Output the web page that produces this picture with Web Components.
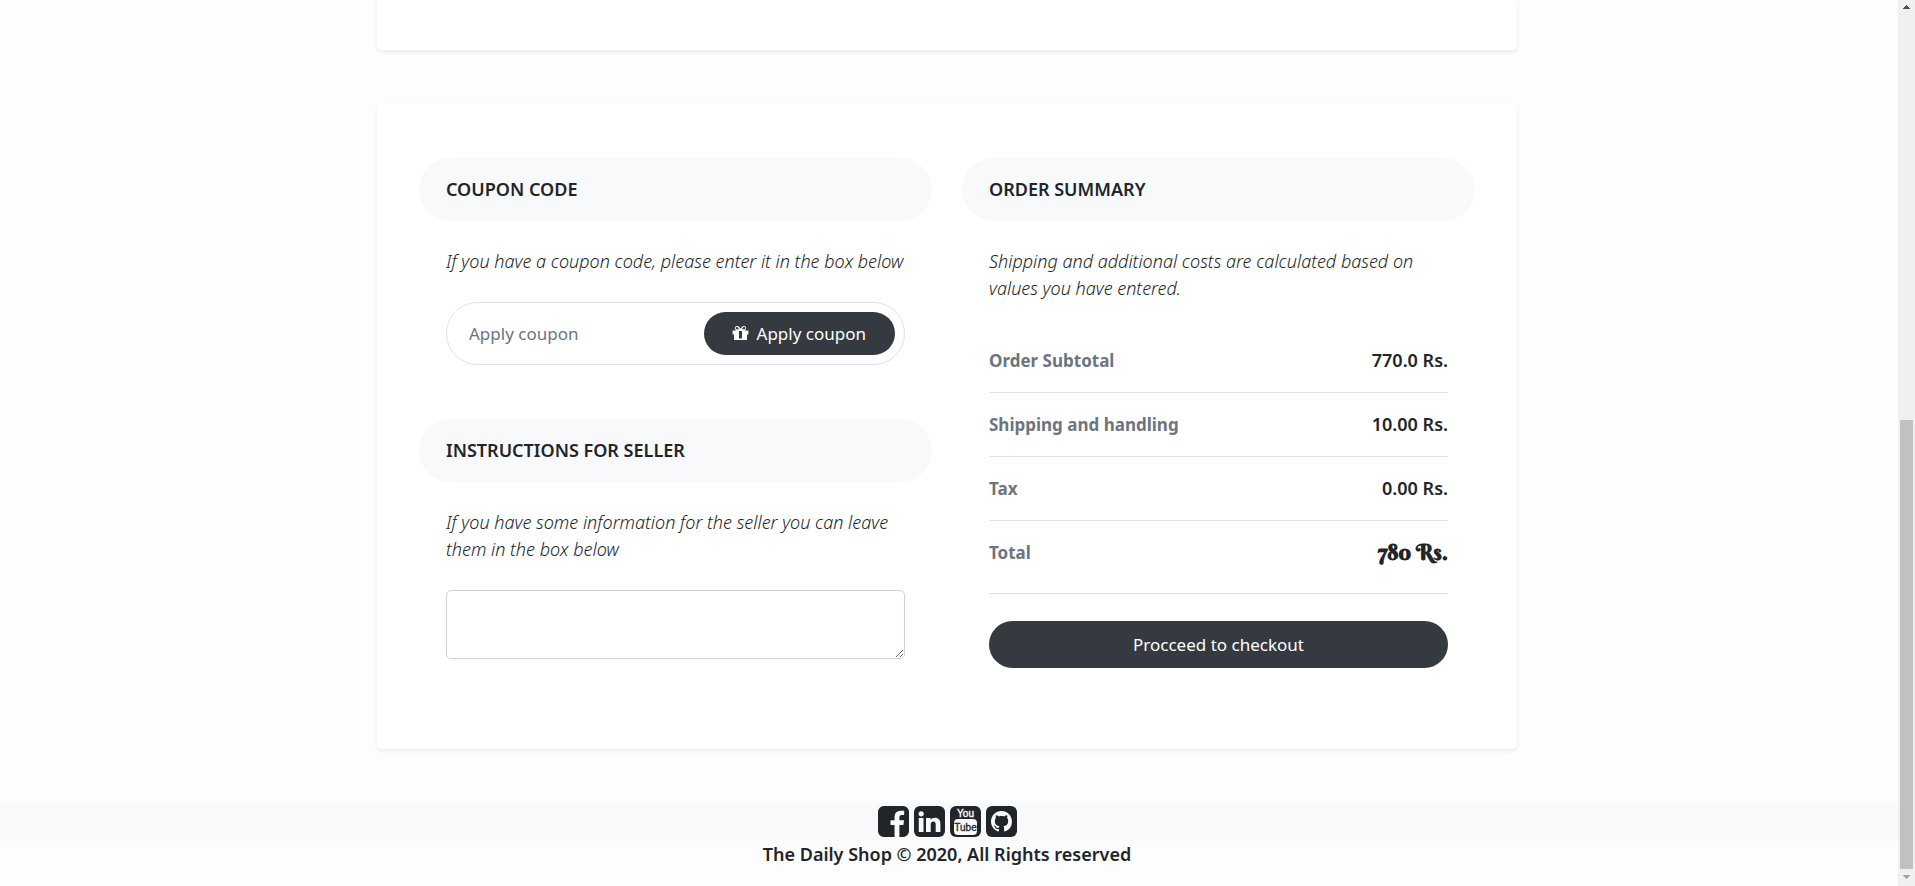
<!DOCTYPE html>
<html lang="en">
<head>
<meta charset="utf-8">
<title>The Daily Shop</title>
<style>
body { margin: 0; }
</style>
</head>
<body>
<shop-page>
  <shop-card slot="main" class="first"></shop-card>
  <shop-card slot="main">
    <shop-column>
      <shop-section>
        <span slot="title">Coupon code</span>
        <span slot="lead">If you have a coupon code, please enter it in the box below</span>
        <coupon-form></coupon-form>
      </shop-section>
      <shop-section>
        <span slot="title">Instructions for seller</span>
        <span slot="lead">If you have some information for the seller you can leave them in the box below</span>
        <seller-note></seller-note>
      </shop-section>
    </shop-column>
    <shop-column>
      <shop-section>
        <span slot="title">Order summary</span>
        <span slot="lead">Shipping and additional costs are calculated based on values you have entered.</span>
        <order-summary></order-summary>
      </shop-section>
    </shop-column>
  </shop-card>
  <shop-footer slot="footer"></shop-footer>
</shop-page>
<script>
function define(name, html) {
  const t = document.createElement('template');
  t.innerHTML = html;
  customElements.define(name, class extends HTMLElement {
    constructor() {
      super();
      this.attachShadow({ mode: 'open' }).appendChild(t.content.cloneNode(true));
    }
  });
}

define('shop-page', `
<style>
:host { display: grid; grid-template-columns: minmax(0, 1fr) 17px; height: 100vh; overflow: hidden; background: #fdfdfd;
  font: 17px/27px "Noto Sans", "Open Sans", sans-serif; color: #212529; }
.view { min-width: 0; }
main { display: grid; justify-items: center; gap: 54px; padding: 0 20px 54px 16px; }
</style>
<div class="view"><main><slot name="main"></slot></main><slot name="footer"></slot></div>
<scroll-rail></scroll-rail>`);

define('shop-card', `
<style>
:host { box-sizing: border-box; width: 100%; max-width: 1140px; padding: 54px 27px; display: grid;
  grid-template-columns: repeat(auto-fit, minmax(360px, 1fr)); background: #fff; border-radius: 5px;
  box-shadow: 0 2px 4px rgba(0, 0, 0, .075); }
:host(.first) { padding: 50px 0 0; border-radius: 0 0 5px 5px; }
</style><slot></slot>`);

define('shop-column', `<style>:host { display: block; padding: 0 15px; min-width: 0; }</style><slot></slot>`);

define('shop-section', `
<style>
:host { display: block; }
h2 { margin: 0; padding: 18px 27px; border-radius: 32px; background: #f8f9fb; font-size: 18px; font-weight: 600; text-transform: uppercase; }
.body { padding: 27px; }
p { margin: 0 0 27px; font-size: 18px; font-weight: 300; font-style: italic; }
</style>
<h2><slot name="title"></slot></h2>
<div class="body"><p><slot name="lead"></slot></p><slot></slot></div>`);

define('coupon-form', `
<style>
:host { display: block; margin-bottom: 27px; }
form { display: flex; padding: 9px; border: 1px solid #dee2e6; border-radius: 32px; }
input { flex: 1; min-width: 0; box-sizing: border-box; height: 43px; padding: 0 13px; border: 0; background: none; font: inherit; color: #495057; outline: 0; }
input::placeholder { color: #6c757d; opacity: 1; }
button { display: flex; align-items: center; gap: 8px; height: 43px; padding: 0 29px 0 28px; border: 0; border-radius: 22px; background: #343a40; color: #fff; font: inherit; white-space: nowrap; }
svg { width: 17px; height: 17px; fill: currentColor; }
</style>
<form>
<input type="text" placeholder="Apply coupon" aria-label="Apply coupon">
<button type="button"><svg viewBox="0 0 17 17" aria-hidden="true"><path fill-rule="evenodd" d="M.6 5.5h4.2A2.3 2.3 0 1 1 7 1.8l1.5 1.9L10 1.8a2.3 2.3 0 1 1 2.2 3.7h4.2v4H15V15H2V9.500H.6zM3.700 3.200c0 .7.5 1.100 1.200 1.100h2.200L5.900 2.500c-.8-1-2.200-.4-2.200.7zm9.600 0c0-1.100-1.400-1.700-2.200-.7L9.900 4.300h2.200c.7 0 1.200-.4 1.200-1.100zM7 6v7.500h3V6z"/></svg><span>Apply coupon</span></button>
</form>`);

define('seller-note', `
<style>
:host { display: block; }
textarea { display: block; box-sizing: border-box; width: 100%; height: 69px; padding: 6px 13px; border: 1px solid #ced4da; border-radius: 5px; font: inherit; color: #495057; background: #fff; resize: vertical; outline: 0; }
</style><textarea rows="2" aria-label="Instructions for seller"></textarea>`);

define('order-summary', `
<style>
:host { display: block; }
table { width: 100%; border-collapse: separate; border-spacing: 0; margin-bottom: 27px; }
th, td { padding: 18px 0; border-bottom: 1px solid #dee2e6; vertical-align: top; line-height: 27px; }
th { text-align: left; color: #6c757d; font-size: 17px; font-weight: 700; }
td { text-align: right; font-size: 18px; font-weight: 600; }
.total td { padding-bottom: 27px; font-family: "Berkshire Swash", "Liberation Serif", serif; font-size: 22px; font-weight: 700; }
button { display: block; width: 100%; height: 47px; padding: 0; border: 0; border-radius: 24px; background: #343a40; color: #fff; font: inherit; }
</style>
<table>
<tr><th scope="row">Order Subtotal</th><td>770.0 Rs.</td></tr>
<tr><th scope="row">Shipping and handling</th><td>10.00 Rs.</td></tr>
<tr><th scope="row">Tax</th><td>0.00 Rs.</td></tr>
<tr class="total"><th scope="row">Total</th><td>780 Rs.</td></tr>
</table>
<button type="button">Procceed to checkout</button>`);

define('shop-footer', `
<style>
:host { display: block; text-align: center; font-size: 18px; font-weight: 600; }
nav { display: flex; justify-content: center; gap: 5px; padding: 3px 4px 4px 0; background: #f8f9fb; }
a { display: block; height: 31px; color: inherit; }
svg { display: block; width: 31px; height: 31px; }
text { font-family: "Liberation Sans Narrow", "Liberation Sans", sans-serif; font-weight: 400; text-anchor: middle; }
p { margin: 0; padding-right: 4px; }
</style>
<nav aria-label="Social links">
<a href="#facebook" aria-label="Facebook"><svg viewBox="128 128 1536 1536"><path fill="#212529" d="M1376 128q119 0 203.500 84.500t84.500 203.500v960q0 119-84.500 203.500t-203.500 84.500h-188v-595h199l30-232h-229v-148q0-56 23.500-84t91.500-28l122-1v-207q-63-9-178-9-136 0-217.500 80t-81.500 226v171h-200v232h200v595h-532q-119 0-203.500-84.500t-84.500-203.500v-960q0-119 84.500-203.500t203.500-84.500h960z"/></svg></a>
<a href="#linkedin" aria-label="LinkedIn"><svg viewBox="0 0 31 31"><rect width="31" height="31" rx="6" fill="#212529"/><g fill="#f8f9fb"><circle cx="7.200" cy="7.800" r="2.600"/><path d="M4.800 12h4.700v14H4.800zM12 12h4.700v2c.9-1.400 2.300-2.300 4.400-2.300 3.200 0 5.300 2.100 5.300 6.300v8h-4.700v-7.500c0-1.900-.7-3.100-2.300-3.100-1.700 0-2.700 1.200-2.700 3.100V26H12z"/></g></svg></a>
<a href="#youtube" aria-label="YouTube"><svg viewBox="0 0 31 31"><rect width="31" height="31" rx="6" fill="#212529"/><rect x="4" y="13" width="23" height="16" rx="4" fill="#f8f9fb"/><text x="15.500" y="11" font-size="10" fill="#f8f9fb" stroke="#f8f9fb" stroke-width=".4">You</text><text x="15.500" y="25" font-size="10" fill="#212529" stroke="#212529" stroke-width=".3">Tube</text></svg></a>
<a href="#github" aria-label="GitHub"><svg viewBox="0 0 31 31"><rect width="31" height="31" rx="6" fill="#212529"/><path transform="translate(5 5) scale(1.310)" fill="#f8f9fb" d="M8 0C3.580 0 0 3.580 0 8c0 3.540 2.290 6.530 5.470 7.590.4.070.55-.17.55-.38 0-.19-.01-.82-.01-1.490-2.010.37-2.530-.49-2.690-.94-.09-.23-.48-.94-.82-1.130-.28-.15-.68-.52-.01-.53.63-.01 1.080.58 1.230.82.72 1.210 1.870.87 2.330.66.07-.52.28-.87.51-1.070-1.780-.2-3.640-.89-3.640-3.950 0-.87.31-1.590.82-2.150-.08-.2-.36-1.020.08-2.120 0 0 .67-.21 2.200.82.64-.18 1.320-.27 2-.27.68 0 1.360.09 2 .27 1.530-1.040 2.200-.82 2.200-.82.44 1.100.16 1.920.08 2.120.51.56.82 1.270.82 2.150 0 3.070-1.870 3.750-3.650 3.950.29.25.54.73.54 1.480 0 1.070-.01 1.930-.01 2.200 0 .21.15.46.55.38A8.013 8.013 0 0 0 16 8c0-4.420-3.580-8-8-8z"/></svg></a>
</nav>
<p>The Daily Shop © 2020, All Rights reserved</p>`);

define('scroll-rail', `
<style>
:host { display: grid; grid-template-rows: 17px 403fr 449fr 17px; justify-items: center; background: #f0f0f0; }
svg { width: 17px; height: 17px; }
.thumb { grid-row: 3; width: 13px; background: #c1c1c1; }
.down { grid-row: 4; }
</style>
<svg viewBox="0 0 17 17" shape-rendering="crispEdges"><path fill="#505050" d="M5 9V8h1V7h1V6h1V5h1v1h1v1h1v1h1v1z"/></svg>
<div class="thumb"></div>
<svg class="down" viewBox="0 0 17 17" shape-rendering="crispEdges"><path fill="#a3a3a3" d="M5 6v1h1v1h1v1h1v1h1V9h1V8h1V7h1V6z"/></svg>`);
</script>
</body>
</html>
